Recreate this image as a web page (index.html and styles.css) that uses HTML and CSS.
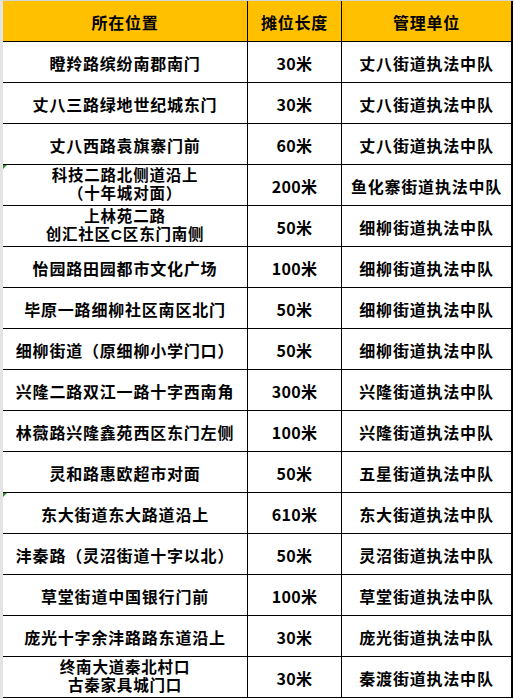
FILE: index.html
```html
<!DOCTYPE html>
<html lang="zh-CN">
<head>
<meta charset="utf-8">
<title>摊位</title>
<link rel="stylesheet" href="styles.css">
</head>
<body>
<div class="sheet">
  <div class="grid">
    <div class="cell head">所在位置</div>
    <div class="cell head">摊位长度</div>
    <div class="cell head">管理单位</div>

    <div class="cell">瞪羚路缤纷南郡南门</div>
    <div class="cell num">30米</div>
    <div class="cell">丈八街道执法中队</div>

    <div class="cell">丈八三路绿地世纪城东门</div>
    <div class="cell num">30米</div>
    <div class="cell">丈八街道执法中队</div>

    <div class="cell">丈八西路袁旗寨门前</div>
    <div class="cell num">60米</div>
    <div class="cell">丈八街道执法中队</div>

    <div class="cell flag two"><span class="ln">科技二路北侧道沿上</span><span class="ln">（十年城对面）</span></div>
    <div class="cell num">200米</div>
    <div class="cell">鱼化寨街道执法中队</div>

    <div class="cell two"><span class="ln">上林苑二路</span><span class="ln">创汇社区C区东门南侧</span></div>
    <div class="cell num">50米</div>
    <div class="cell">细柳街道执法中队</div>

    <div class="cell">怡园路田园都市文化广场</div>
    <div class="cell num">100米</div>
    <div class="cell">细柳街道执法中队</div>

    <div class="cell">毕原一路细柳社区南区北门</div>
    <div class="cell num">50米</div>
    <div class="cell">细柳街道执法中队</div>

    <div class="cell">细柳街道（原细柳小学门口）</div>
    <div class="cell num">50米</div>
    <div class="cell">细柳街道执法中队</div>

    <div class="cell">兴隆二路双江一路十字西南角</div>
    <div class="cell num">300米</div>
    <div class="cell">兴隆街道执法中队</div>

    <div class="cell">林薇路兴隆鑫苑西区东门左侧</div>
    <div class="cell num">100米</div>
    <div class="cell">兴隆街道执法中队</div>

    <div class="cell">灵和路惠欧超市对面</div>
    <div class="cell num">50米</div>
    <div class="cell">五星街道执法中队</div>

    <div class="cell flag">东大街道东大路道沿上</div>
    <div class="cell num">610米</div>
    <div class="cell">东大街道执法中队</div>

    <div class="cell">沣秦路（灵沼街道十字以北）</div>
    <div class="cell num">50米</div>
    <div class="cell">灵沼街道执法中队</div>

    <div class="cell">草堂街道中国银行门前</div>
    <div class="cell num">100米</div>
    <div class="cell">草堂街道执法中队</div>

    <div class="cell">庞光十字余沣路路东道沿上</div>
    <div class="cell num">30米</div>
    <div class="cell">庞光街道执法中队</div>

    <div class="cell two"><span class="ln">终南大道秦北村口</span><span class="ln">古秦家具城门口</span></div>
    <div class="cell num">30米</div>
    <div class="cell">秦渡街道执法中队</div>
  </div>
</div>
</body>
</html>
```

FILE: styles.css
```css
html, body {
  margin: 0;
  padding: 0;
  background: #ffffff;
}

.sheet {
  border-top: 1px solid #d6d6d6;
  border-left: 3px solid #e4e4e4;
  width: 511px;
  height: 698px;
  background: #ffffff;
}

.grid {
  display: grid;
  grid-template-columns: 245px 94px 171px;
  grid-auto-rows: 41px;
  font-family: "Noto Sans CJK SC", "Noto Sans", sans-serif;
  font-weight: 700;
  font-size: 16px;
  line-height: 18px;
  color: #000000;
  letter-spacing: 0.8px;
}

.cell {
  box-sizing: border-box;
  border-right: 1px solid #000000;
  border-bottom: 1px solid #000000;
  display: flex;
  align-items: center;
  justify-content: center;
  text-align: center;
  position: relative;
  padding-top: 1px;
}

.cell:nth-child(3n) {
  border-right-width: 2px;
}

.two {
  flex-direction: column;
  padding-top: 0;
}

.ln {
  display: block;
  height: 18px;
  line-height: 18px;
  font-family: "Liberation Sans", "Noto Sans CJK SC", sans-serif;
  font-size: 15.5px;
}

.head {
  background: #ffc000;
}

.num {
  letter-spacing: 0.3px;
}

.flag::before {
  content: "";
  position: absolute;
  left: 0;
  top: 0;
  border-top: 4px solid #2e8b2e;
  border-right: 4px solid transparent;
}
```
